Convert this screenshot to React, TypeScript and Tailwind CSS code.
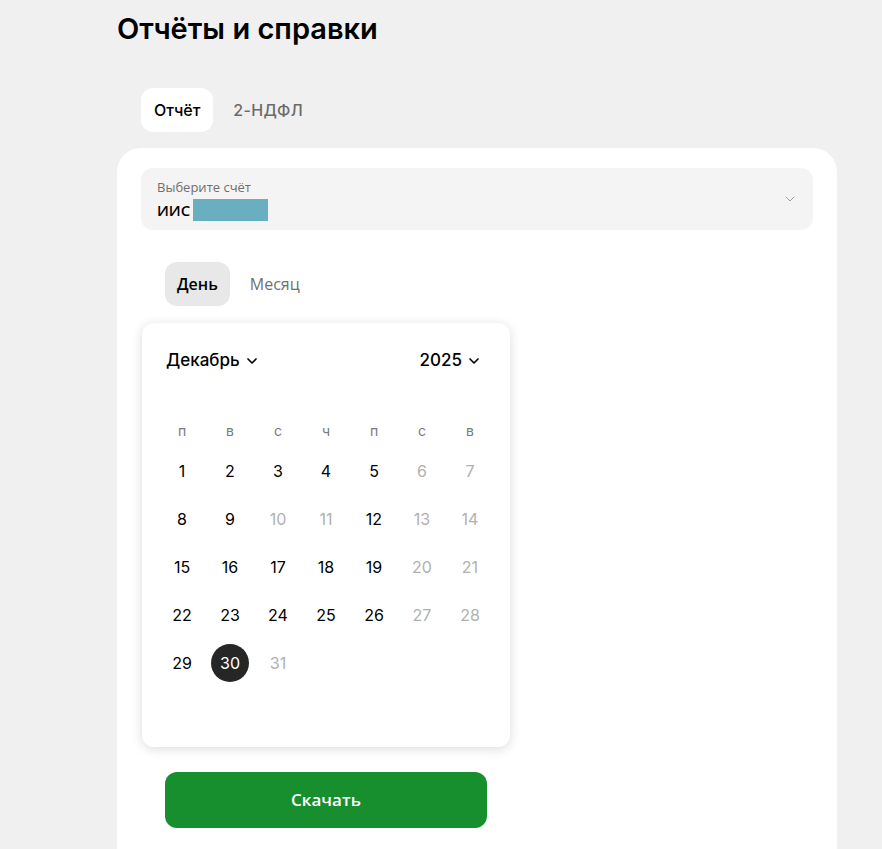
import { ChevronDown } from "lucide-react";

const weekdays = ["п", "в", "с", "ч", "п", "с", "в"];

// december 2025, starts on monday
const muted = [6, 7, 10, 11, 13, 14, 20, 21, 27, 28, 31];

export default function App() {
  const days = Array.from({ length: 31 }, (_, i) => i + 1);
  return (
    <div className="min-h-[849px] bg-[#f0f0f0] pl-[117px] pr-[45px] font-['Inter',sans-serif] text-black">
      <h1 className="pt-[10px] text-[29px] font-semibold leading-[38px]">Отчёты и справки</h1>

      <div className="mt-[40px] flex gap-2 pl-6">
        <button className="h-11 rounded-xl bg-white px-[13px] text-[16px] font-medium">Отчёт</button>
        <button className="h-11 rounded-xl px-3 text-[16px] font-medium tracking-[0.3px] text-[#6b6b6b]">2-НДФЛ</button>
      </div>

      <div className="mt-4 h-[701px] rounded-t-3xl bg-white px-6 pt-5">
        <div className="flex h-[62px] items-center justify-between rounded-xl bg-[#f4f4f4] px-4">
          <div className="flex flex-col font-['Open_Sans',sans-serif]">
            <span className="text-[13px] leading-[18px] text-[#6f6f6f]">Выберите счёт</span>
            <div className="mt-[3px] flex items-center gap-[3px]">
              <span className="text-[15px] font-semibold leading-5">ИИС</span>
              <span className="h-[22px] w-[75px] bg-[#6aafbf]" />
            </div>
          </div>
          <ChevronDown className="mr-[-1px] h-4 w-4 text-[#a0a0a0]" strokeWidth={1.5} />
        </div>

        <div className="mt-8 flex gap-2 pl-6 font-['Open_Sans',sans-serif]">
          <button className="h-11 rounded-xl bg-[#e8e8e8] px-3 text-[16px] font-semibold">День</button>
          <button className="h-11 rounded-xl px-3 text-[16px] font-medium text-[#707070]">Месяц</button>
        </div>

        <div className="ml-[1px] mt-[17px] w-[368px] rounded-xl bg-white px-4 pb-3 pt-5 shadow-[0_2px_12px_rgba(0,0,0,0.14)]">
          <div className="flex h-9 items-center justify-between px-2 text-[17px] font-medium">
            <span className="flex items-center gap-1">
              Декабрь <ChevronDown className="h-4 w-4" strokeWidth={2.5} />
            </span>
            <span className="mr-[4px] flex items-center gap-1">
              2025 <ChevronDown className="h-4 w-4" strokeWidth={2.5} />
            </span>
          </div>

          <div className="mt-[34px] grid grid-cols-7">
            {weekdays.map((w, i) => (
              <div key={i} className="flex h-[34px] items-center justify-center text-[14px] text-[#7a7a7a]">
                {w}
              </div>
            ))}
          </div>
          <div className="grid grid-cols-7 grid-rows-6">
            {days.map((d) => (
              <div key={d} className="flex h-12 items-center justify-center">
                <span
                  className={
                    d === 30
                      ? "flex h-[38px] w-[38px] items-center justify-center rounded-full bg-[#262626] text-[16px] text-white"
                      : muted.includes(d)
                      ? "text-[16px] text-[#b0b0b0]"
                      : "text-[16px] text-black"
                  }
                >
                  {d}
                </span>
              </div>
            ))}
            <div className="col-span-7 h-12" />
          </div>
        </div>

        <button className="ml-6 mt-[25px] h-14 w-[322px] rounded-xl bg-[#178f2e] font-['Open_Sans',sans-serif] text-[17px] font-semibold text-white">
          Скачать
        </button>
      </div>
    </div>
  );
}
